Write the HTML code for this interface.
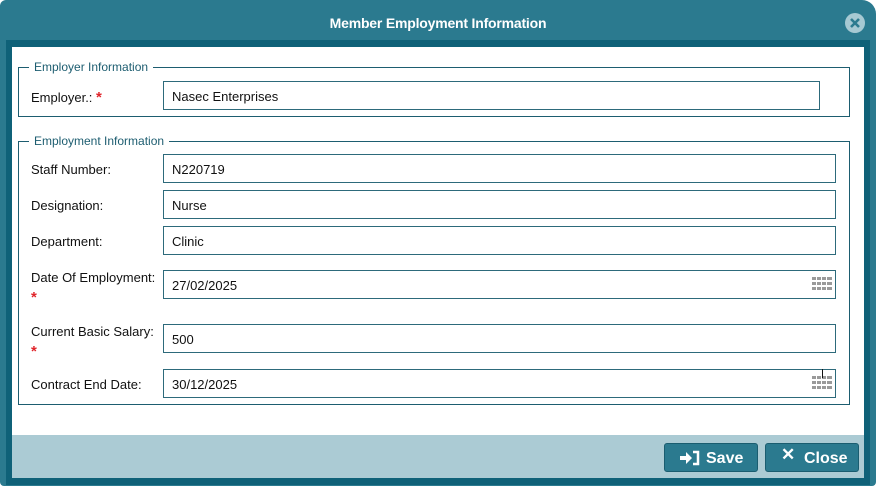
<!DOCTYPE html>
<html><head><meta charset="utf-8"><style>
*{margin:0;padding:0;box-sizing:border-box}
body{width:876px;height:489px;background:#fff;font-family:"Liberation Sans",sans-serif;position:relative;overflow:hidden}
.a{position:absolute}
.hdr{left:0;top:0;width:876px;height:486px;background:#2b7a8f;border-radius:6px 14px 4px 4px}
.inner{left:6px;top:40px;width:864px;height:445px;background:#0f6178}
.body{left:12px;top:47px;width:852px;height:388px;background:#fff}
.foot{left:12px;top:435px;width:852px;height:43px;background:#abcbd4}
.title{left:0;top:15px;width:852px;text-align:center;color:#fff;font-weight:bold;font-size:14px;letter-spacing:-0.2px}
.fs{border:1px solid #1d5d70}
.leg{background:#fff;color:#1d5d70;font-size:12px;padding:0 5px}
.lbl{font-size:13px;color:#111}
.inp{border:1px solid #2d6a7b;height:29px;font-size:13px;padding:7px 8px;color:#111;background:#fff}
.req{color:#e0242a;font-size:15px;font-weight:bold}
.btn{background:#2b7a8f;border:1px solid #1a5d70;border-radius:3px;color:#fff;font-weight:bold;font-size:16px;height:29px;top:443px}
</style></head><body>
<div class="a hdr"></div>
<div class="a inner"></div>
<div class="a body"></div>
<div class="a foot"></div>
<div class="a title" style="left:12px">Member Employment Information</div>
<svg class="a" style="left:845px;top:13px" width="20" height="20" viewBox="0 0 20 20"><circle cx="10" cy="10" r="10" fill="#a6c9d3"/><path d="M6 6L14 14M14 6L6 14" stroke="#2b7a8f" stroke-width="2.6"/></svg>

<div class="a fs" style="left:18px;top:67px;width:832px;height:50px"></div>
<div class="a leg" style="left:29px;top:60px">Employer Information</div>
<div class="a lbl" style="left:31px;top:89px">Employer.: <span class="req">*</span></div>
<div class="a inp" style="left:163px;top:81px;width:657px">Nasec Enterprises</div>

<div class="a fs" style="left:18px;top:141px;width:832px;height:264px"></div>
<div class="a leg" style="left:29px;top:134px">Employment Information</div>
<div class="a lbl" style="left:31px;top:162px">Staff Number:</div>
<div class="a inp" style="left:163px;top:154px;width:673px">N220719</div>
<div class="a lbl" style="left:31px;top:198px">Designation:</div>
<div class="a inp" style="left:163px;top:190px;width:673px">Nurse</div>
<div class="a lbl" style="left:31px;top:234px">Department:</div>
<div class="a inp" style="left:163px;top:226px;width:673px">Clinic</div>
<div class="a lbl" style="left:31px;top:270px">Date Of Employment:</div>
<div class="a req" style="left:31px;top:289px">*</div>
<div class="a inp" style="left:163px;top:270px;width:673px">27/02/2025</div>
<svg class="a" style="left:812px;top:276px" width="20" height="17"><g fill="#9a9a9a"><rect x="0" y="1" width="20" height="3"/><rect x="0" y="6" width="20" height="3"/><rect x="0" y="11" width="20" height="3"/></g><g stroke="#fff" stroke-width="1"><path d="M4.5 0V17M9.5 0V17M14.5 0V17"/></g></svg>
<div class="a lbl" style="left:31px;top:324px">Current Basic Salary:</div>
<div class="a req" style="left:31px;top:343px">*</div>
<div class="a inp" style="left:163px;top:324px;width:673px">500</div>
<div class="a lbl" style="left:31px;top:377px">Contract End Date:</div>
<div class="a inp" style="left:163px;top:369px;width:673px">30/12/2025</div>
<svg class="a" style="left:812px;top:375px" width="20" height="17"><g fill="#9a9a9a"><rect x="0" y="1" width="20" height="3"/><rect x="0" y="6" width="20" height="3"/><rect x="0" y="11" width="20" height="3"/></g><g stroke="#fff" stroke-width="1"><path d="M4.5 0V17M9.5 0V17M14.5 0V17"/></g></svg>
<div class="a" style="left:822px;top:369px;width:1px;height:9px;background:#111"></div>

<div class="a btn" style="left:664px;width:94px"><svg class="a" style="left:14px;top:6px" width="22" height="16" viewBox="0 0 22 16"><path d="M1 6H7V2L13 8L7 14V10H1Z" fill="#fff"/><path d="M14 2H19V14H14" stroke="#fff" stroke-width="2.5" fill="none"/></svg><span class="a" style="left:41px;top:6px">Save</span></div>
<div class="a btn" style="left:765px;width:94px"><span class="a" style="left:15px;top:1px;font-size:17px">✕</span><span class="a" style="left:38px;top:6px">Close</span></div>
</body></html>
